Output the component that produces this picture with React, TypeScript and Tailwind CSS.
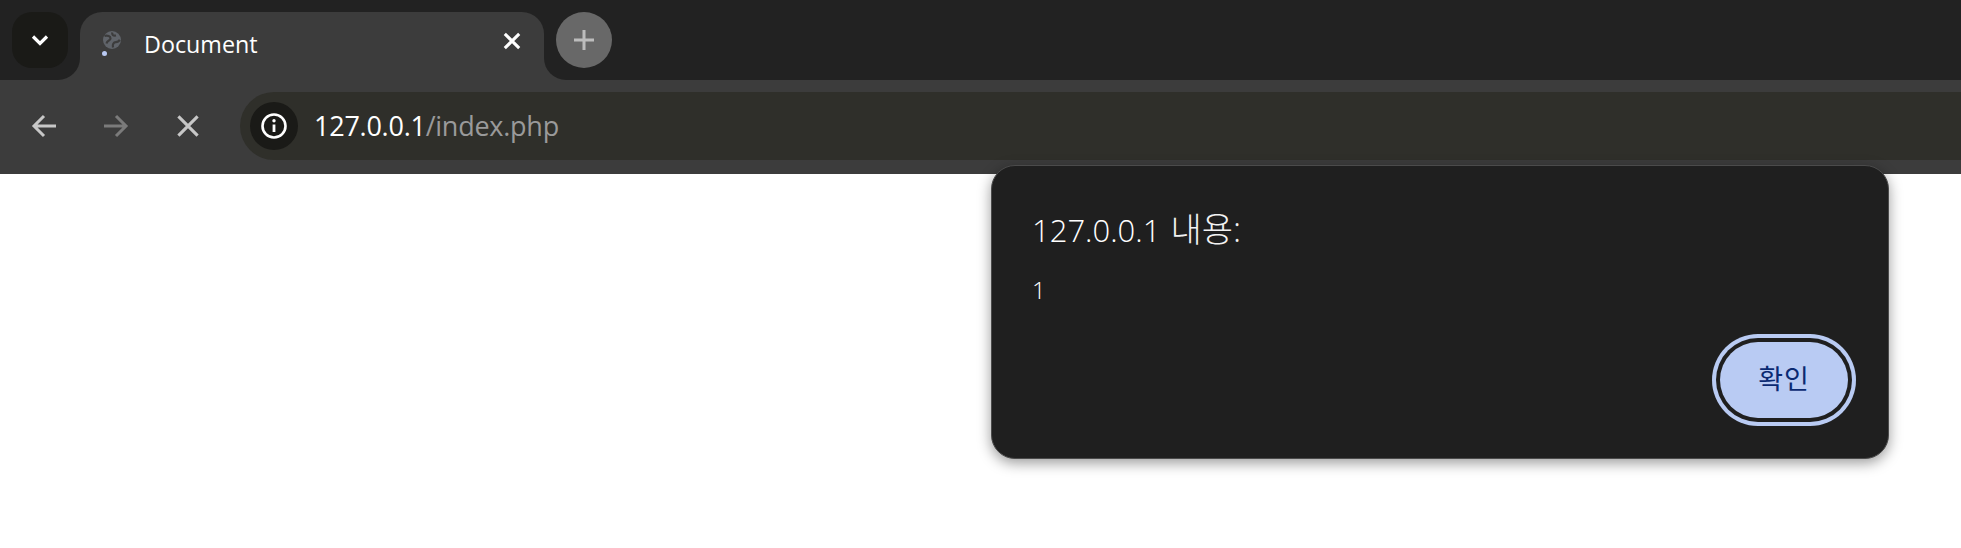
const uiFont = "font-['Open_Sans','Noto_Sans_CJK_KR',sans-serif]";

function Flare({ side }: { side: "left" | "right" }) {
  return (
    <div className={`absolute bottom-0 size-[22px] bg-[#3c3c3c] ${side === "left" ? "left-[-22px]" : "right-[-22px]"}`}>
      <div className={`size-full bg-[#222222] ${side === "left" ? "rounded-br-[22px]" : "rounded-bl-[22px]"}`} />
    </div>
  );
}

function Favicon() {
  return (
    <svg width="24" height="26" viewBox="0 0 24 26" className="shrink-0" aria-hidden="true">
      <circle cx="12" cy="9" r="9" fill="#60646a" />
      <path d="M4.500 5c3-.8 6 .2 6 2.500s-3.500 1.800-4 5M13 16.500c-.8-3 .6-5.300 2.800-5.300s3.200-.9 4-2.400M12.500 1.500c-1 2.200.5 3.500 3.500 3" stroke="#3c3c3c" strokeWidth="2.200" fill="none" />
      <circle cx="4.500" cy="22.500" r="2.500" fill="#b9c9f2" />
    </svg>
  );
}

function Cross({ size, color, weight }: { size: number; color: string; weight: number }) {
  return (
    <svg width={size} height={size} viewBox="0 0 20 20" aria-hidden="true">
      <path d="M2 2 18 18M18 2 2 18" fill="none" stroke={color} strokeWidth={weight} />
    </svg>
  );
}

function TabStrip() {
  return (
    <div className="flex h-[80px] items-start gap-3 bg-[#222222] pl-3 pt-3">
      <div className="relative z-10 flex size-14 items-center justify-center rounded-[20px] bg-[#1a1a17]">
        <svg width="18" height="12" viewBox="0 0 18 12" aria-hidden="true">
          <path d="M2 2.500 9 9.500 16 2.500" fill="none" stroke="#ffffff" strokeWidth="3.200" />
        </svg>
      </div>
      <div className="relative flex h-[68px] w-[464px] items-start rounded-t-[22px] bg-[#3c3c3c] pl-[20px]">
        <Flare side="left" />
        <Flare side="right" />
        <div className="mt-[19px]">
          <Favicon />
        </div>
        <span className={`${uiFont} ml-[20px] mt-[14px] text-[23.3px] leading-[36px] text-white`}>Document</span>
        <div className="absolute right-[23px] top-[20px] flex">
          <Cross size={18} color="#ffffff" weight={3.400} />
        </div>
      </div>
      <div className="relative z-10 flex size-14 items-center justify-center rounded-full bg-[#686868]">
        <svg width="22" height="22" viewBox="0 0 22 22" aria-hidden="true">
          <path d="M11 1v20M1 11h20" fill="none" stroke="#bdbdbd" strokeWidth="3" />
        </svg>
      </div>
    </div>
  );
}

function Arrow({ flip, color }: { flip?: boolean; color: string }) {
  return (
    <svg width="26" height="24" viewBox="0 0 26 24" className={flip ? "rotate-180" : ""} aria-hidden="true">
      <path d="M25 12H3M13 2 3 12l10 10" fill="none" stroke={color} strokeWidth="3" />
    </svg>
  );
}

function Toolbar() {
  return (
    <div className="flex h-[94px] items-start bg-[#3c3c3c] pl-[31px] pt-[12px]">
      <div className="mt-[22px] flex">
        <Arrow color="#c7c7c7" />
      </div>
      <div className="ml-[46px] mt-[22px] flex">
        <Arrow flip color="#7b7b7b" />
      </div>
      <div className="ml-[47px] mt-[22px] flex">
        <Cross size={24} color="#c7c7c7" weight={2.600} />
      </div>
      <div className="ml-[40px] flex h-[68px] flex-1 items-center rounded-l-[34px] bg-[#2f2f2a] pl-[10px]">
        <div className="flex size-12 items-center justify-center rounded-full bg-[#1a1a17]">
          <svg width="28" height="28" viewBox="0 0 28 28" aria-hidden="true">
            <circle cx="14" cy="14" r="11.500" fill="none" stroke="#ffffff" strokeWidth="2.600" />
            <path d="M14 12.500v7.500" stroke="#ffffff" strokeWidth="2.800" />
            <circle cx="14" cy="8.800" r="1.700" fill="#ffffff" />
          </svg>
        </div>
        <span className={`${uiFont} ml-[16px] text-[27px] leading-[40px] tracking-[-0.25px] text-white`}>
          127.0.0.1<span className="text-[#9a9a9a]">/index.php</span>
        </span>
      </div>
    </div>
  );
}

function AlertDialog() {
  return (
    <div className="absolute left-[991px] top-[165px] flex h-[294px] w-[898px] flex-col rounded-[24px] border border-[#4b4b4b] bg-[#1f1f1f] pl-[40px] pr-[40px] shadow-[0_4px_14px_rgba(0,0,0,0.4)]">
      <p className={`${uiFont} mt-[40px] text-[31px] font-light leading-[46px] text-white`}>
        127.0.0.1 <span className="ml-[2px] text-[34px] text-[#f2f2f2]">내용:</span>
      </p>
      <p className={`${uiFont} mt-[19px] text-[24px] font-light leading-[36px] text-white`}>1</p>
      <div className="mt-[34px] flex justify-end">
        <button className={`${uiFont} flex h-[76px] w-[128px] items-center justify-center rounded-full bg-[#b9cbf3] pb-[2px] text-[27px] tracking-[1px] text-[#0b2a72] shadow-[0_0_0_4px_#1f1f1f,0_0_0_8px_#b9cbf3]`}>
          확인
        </button>
      </div>
    </div>
  );
}

export default function App() {
  return (
    <div className="relative h-[548px] w-[1961px] overflow-hidden bg-white">
      <TabStrip />
      <Toolbar />
      <AlertDialog />
    </div>
  );
}
